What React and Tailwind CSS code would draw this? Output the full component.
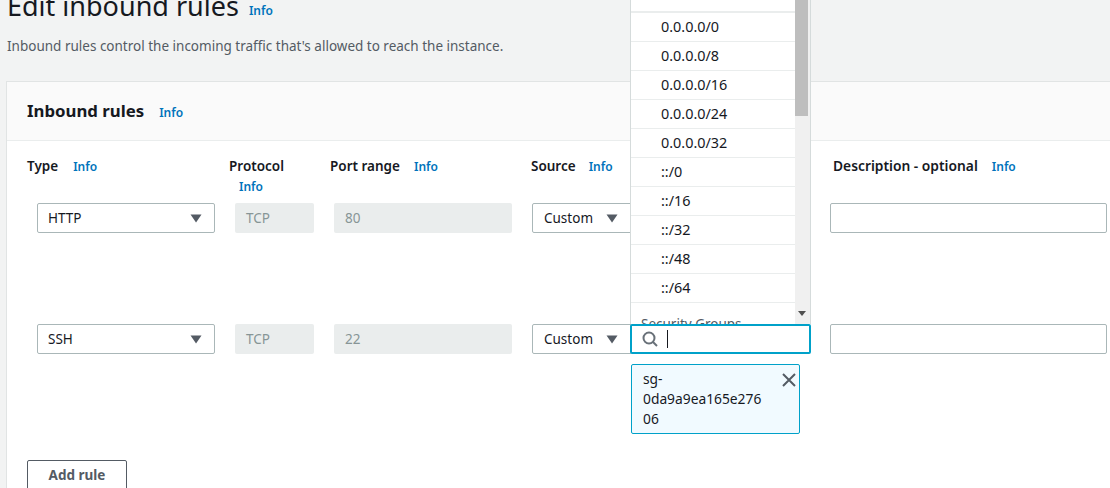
import { useState } from 'react';

const font = { fontFamily: '"Noto Sans", sans-serif' };
const cidrs = ['0.0.0.0/0', '0.0.0.0/8', '0.0.0.0/16', '0.0.0.0/24', '0.0.0.0/32', '::/0', '::/16', '::/32', '::/48', '::/64'];

function Info({ className = '' }) {
  return <a className={`text-[12px] leading-[16px] font-semibold text-[#0073bb] ${className}`}>Info</a>;
}

function Caret() {
  return (
    <svg width="12" height="9" viewBox="0 0 12 9" className="shrink-0">
      <path d="M0.5 0.5H11.5L6 8.5Z" fill="#545b64" />
    </svg>
  );
}

function Select({ label, className = '' }) {
  return (
    <div className={`h-[30px] flex items-center justify-between border border-[#aab7b8] rounded-[2px] bg-white text-[13.5px] text-[#16191f] ${className}`}>
      <span>{label}</span>
      <Caret />
    </div>
  );
}

function ReadOnly({ value, className = '' }) {
  return <div className={`h-[30px] flex items-center pl-[11px] rounded-[2px] bg-[#eaeded] text-[13.5px] text-[#879596] ${className}`}>{value}</div>;
}

function CidrDropdown() {
  return (
    <div className="absolute left-[-2px] bottom-full w-[181px] h-[324px] overflow-hidden flex bg-white border-x border-[#d5dbdb] z-10">
      <div className="w-[164px] shrink-0">
        <div className="h-[13px] border-b-2 border-[#eaeded]" />
        {cidrs.map((c) => (
          <div key={c} className="h-[29px] flex items-center pl-[30px] border-b border-[#eaeded] text-[14.4px] text-[#16191f]">{c}</div>
        ))}
        <div className="pl-[10px] pt-[11px] text-[13.5px] text-[#545b64] leading-[20px]">Security Groups</div>
      </div>
      <div className="relative flex-1 bg-[#f0f0f0]">
        <div className="w-[13px] h-[116px] bg-[#bebebe]" />
        <svg width="8" height="5" viewBox="0 0 8 5" className="absolute left-[3px] top-[311px]">
          <path d="M0 0H8L4 5Z" fill="#505050" />
        </svg>
      </div>
    </div>
  );
}

function Row({ type, port, children, className = '' }) {
  return (
    <div className={`flex items-start pl-[30px] ${className}`}>
      <Select label={type} className="w-[178px] pl-[10px] pr-[12px]" />
      <ReadOnly value="TCP" className="w-[79px] ml-[20px]" />
      <ReadOnly value={port} className="w-[178px] ml-[20px]" />
      <Select label="Custom" className="w-[100px] ml-[20px] pl-[11px] pr-[13px]" />
      {children}
      <div className="w-[277px] h-[30px] ml-[18px] border border-[#aab7b8] rounded-[2px] bg-white" />
    </div>
  );
}

export default function App() {
  const [search] = useState('');

  return (
    <div style={font} className="h-[488px] w-[1110px] overflow-hidden bg-[#f2f3f3]">
      <div className="-mt-[12px] pl-[7px] flex items-start">
        <h1 className="text-[27px] leading-[36px] font-normal text-[#16191f]">Edit inbound rules</h1>
        <Info className="ml-[10px] mt-[15px]" />
      </div>
      <p className="mt-[12px] pl-[7px] text-[13.5px] leading-[20px] text-[#545b64]">Inbound rules control the incoming traffic that's allowed to reach the instance.</p>

      <div className="mt-[25px] ml-[6px] h-[500px] border-l-[1px] border-t border-[#e1e4e4] bg-white">
        <div className="h-[59px] pl-[20px] flex items-center bg-[#fafafa] border-b border-[#eaeded]">
          <h2 className="text-[16.8px] font-bold text-[#16191f] leading-[22px]">Inbound rules</h2>
          <Info className="ml-[15px] mt-[3px]" />
        </div>

        <div className="flex pl-[20px] pt-[15px] h-[62px] text-[13.5px] leading-[20px] font-semibold text-[#16191f]">
          <div className="w-[202px] flex items-start"><span>Type</span><Info className="ml-[15px] mt-[3px]" /></div>
          <div className="w-[101px]"><div>Protocol</div><Info className="block ml-[10px] mt-[3px]" /></div>
          <div className="w-[201px] flex items-start"><span>Port range</span><Info className="ml-[14px] mt-[3px]" /></div>
          <div className="w-[302px] flex items-start"><span>Source</span><Info className="ml-[13px] mt-[3px]" /></div>
          <div className="flex items-start"><span className="text-[13.8px]">Description - optional</span><Info className="ml-[14px] mt-[3px]" /></div>
        </div>

        <Row type="HTTP" port="80" className="h-[121px]">
          <div className="w-[180px]" />
        </Row>

        <Row type="SSH" port="22">
          <div className="relative w-[180px]">
            <CidrDropdown />
            <div className="h-[30px] -ml-[2px] w-[181px] flex items-center pl-[10px] border-2 border-[#00a1c9] rounded-[2px] bg-white">
              <svg width="16" height="16" viewBox="0 0 16 16" fill="none" stroke="#687078" strokeWidth="2" className="shrink-0">
                <circle cx="7" cy="7" r="5.5" />
                <path d="M11 11L15 15" />
              </svg>
              <span className="ml-[9px] w-px h-[18px] bg-[#16191f]">{search}</span>
            </div>
            <div className="relative -ml-[1px] mt-[10px] w-[169px] h-[70px] px-[11px] py-[4px] border border-[#00a1c9] rounded-[2px] bg-[#f1faff] text-[13.8px] leading-[20px] text-[#16191f]">
              <div className="w-[125px] break-all">sg-<br />0da9a9ea165e27606</div>
              <svg width="14" height="14" viewBox="0 0 14 14" className="absolute right-[3px] top-[8px]" fill="none" stroke="#545b64" strokeWidth="2">
                <path d="M1 1L13 13M13 1L1 13" />
              </svg>
            </div>
          </div>
        </Row>

        <button className="block ml-[20px] mt-[26px] w-[100px] h-[32px] pb-[2px] border border-[#545b64] rounded-[2px] bg-white text-[13.5px] leading-[20px] font-bold text-[#545b64]">Add rule</button>
      </div>
    </div>
  );
}
